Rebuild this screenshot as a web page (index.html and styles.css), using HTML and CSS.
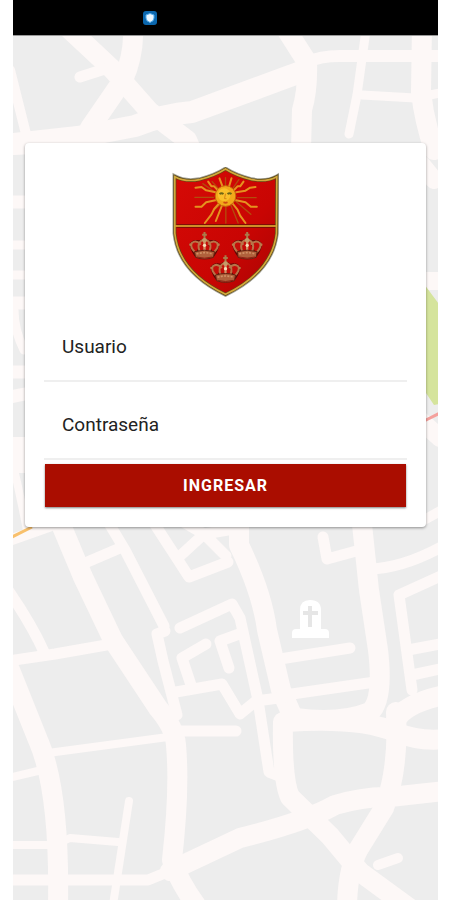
FILE: index.html
```html
<!DOCTYPE html>
<html lang="es">
<head>
    <meta charset="UTF-8">
    <meta name="viewport" content="width=device-width, initial-scale=1.0">
    <title>Ingresar</title>
    <link rel="stylesheet" href="styles.css">
</head>
<body>
    <div class="screen">
        <header class="status-bar">
            <svg class="status-icon" viewBox="0 0 14 14" aria-hidden="true">
                <rect width="14" height="14" rx="3" fill="#0b67ae"/>
                <path d="M7 2.5 L11 4 V7 Q11 10 7 11.5 Q3 10 3 7 V4 Z" fill="#eaf7ff" stroke="#55acec" stroke-width="1"/>
            </svg>
        </header>

        <main class="content">
            <!-- Map background -->
            <svg class="map" viewBox="13 36 425 864" preserveAspectRatio="xMidYMin slice" aria-hidden="true">
                <rect x="13" y="36" width="425" height="864" fill="#ededed"/>
                <g class="roads">
                    <!-- North -->
                    <g stroke-width="20">
                        <path d="M66 26 L112 69 L150 112 L187 140 L200 170"/>
                        <path d="M133 30 Q134 55 123 80 L90 128"/>
                        <path d="M13 144 L78 137 L135 126 Q165 114 192 112 L298 73" stroke-width="22"/>
                        <path d="M284 26 L307 62 Q308 90 302 110 L301 150"/>
                        <path d="M422 26 L421 92 Q424 120 434 150"/>
                    </g>
                    <path d="M80 77 L108 68" stroke-width="11"/>
                    <path d="M308 62 Q320 56 340 56 H445" stroke-width="12"/>
                    <path d="M366 30 L357 95 L349 134" stroke-width="9"/>
                    <path d="M362 95 L415 98 L445 92" stroke-width="9"/>
                    <path d="M10 70 L28 142" stroke-width="10"/>
                    <!-- West edge -->
                    <path d="M5 148 H40 M5 202 H40 M5 303 H40 M5 372 H40 M5 398 L35 392" stroke-width="13"/>
                    <path d="M5 245 H40 M5 275 H40 M24 350 Q14 330 14 310" stroke-width="9"/>
                    <path d="M5 455 H40" stroke-width="36"/>
                    <path d="M14 470 Q17 480 28 535" stroke-width="8"/>
                    <!-- East edge -->
                    <path d="M422 165 L434 180 M420 281 H445 M420 420 L440 438" stroke-width="18"/>
                    <path d="M424 520 L442 510" stroke-width="10"/>
                    <!-- South -->
                    <g stroke-width="20">
                        <path d="M57 515 L83 577 L113 640 L158 708 Q175 728 176 745 Q180 790 172 860 Q178 880 196 905"/>
                        <path d="M10 670 L38 740 Q60 790 58 905"/>
                        <path d="M239 515 V545 Q262 592 267 630 L281 690 L292 715"/>
                        <path d="M361 515 L369 590 L378 650 Q384 700 370 712 Q340 724 295 718"/>
                        <path d="M170 871 L240 838 Q305 822 335 805 Q365 796 390 797 L445 791"/>
                        <path d="M283 722 Q282 780 290 797 L330 836 L360 872 L412 910"/>
                        <path d="M396 712 Q399 770 384 808 L358 850 Q348 870 347 905"/>
                        <path d="M286 722 Q360 717 395 732 Q420 742 445 739"/>
                        <path d="M396 720 Q406 703 445 695"/>
                    </g>
                    <g stroke-width="11">
                        <path d="M8 541 L50 526"/>
                        <path d="M107 520 L125 550 L164 626"/>
                        <path d="M85 563 L120 548"/>
                        <path d="M152 520 L189 577 L228 562"/>
                        <path d="M180 556 L204 534 L226 556 M180 520 L204 534 L240 528"/>
                        <path d="M8 590 Q32 625 44 652"/>
                        <path d="M8 661 L55 654 L112 644"/>
                        <path d="M8 880 H148 L170 871"/>
                        <path d="M323 537 L327 559 L360 550"/>
                        <path d="M370 569 Q404 568 445 545"/>
                        <path d="M445 574 L399 595 L412 690"/>
                        <path d="M408 650 L445 643 M412 675 L445 668"/>
                        <path d="M280 659 L350 648"/>
                        <path d="M285 695 L375 682"/>
                        <path d="M165 631 L157 634 L163 661 L177 715"/>
                        <path d="M180 628 L232 604 L240 618 L258 700 L269 772 L282 777"/>
                        <path d="M206 644 L182 658 L192 688"/>
                        <path d="M176 692 L222 684 L240 714 L256 701 L286 697"/>
                        <path d="M242 633 L220 641 L229 668"/>
                        <path d="M180 731 H236"/>
                    </g>
                    <g stroke-width="8">
                        <path d="M48 753 L168 737 M8 778 L42 770"/>
                        <path d="M8 845 H55 L70 838 L118 842"/>
                        <path d="M129 801 L113 905"/>
                    </g>
                    <path d="M378 865 L398 858" stroke-width="10"/>
                </g>
                <path d="M424 284 L439 304 V404 L434 405 L424 390 Z" fill="#d5e49c"/>
                <path d="M424 421 L440 413" stroke="#f4a09c" stroke-width="3"/>
                <path d="M12 537 L32 527" stroke="#f8c06c" stroke-width="3"/>
                <!-- Cemetery marker -->
                <path d="M300 629 V610 Q300 600 310 600 Q321 600 321 610 V629 H325 Q329 629 329 633 V638 H292 V633 Q292 629 296 629 Z" fill="#fff"/>
                <path d="M310 606 V627 M303 613 H318" stroke="#e6e6e6" stroke-width="4"/>
            </svg>

            <form class="card">
                <!-- Coat of arms -->
                <svg class="crest" viewBox="36 36 320 390" role="img" aria-label="Escudo">
                    <defs>
                        <linearGradient id="field" x1="0" y1="0" x2="1" y2="1">
                            <stop offset="0" stop-color="#d60a06"/>
                            <stop offset="0.6" stop-color="#c90503"/>
                            <stop offset="1" stop-color="#a80504"/>
                        </linearGradient>
                        <g id="crown">
                            <path d="M-30 30 Q-46 6 -44 -8 Q-34 -22 -15 -17 Q0 -28 15 -17 Q34 -22 44 -8 Q46 6 30 30 Q0 42 -30 30 Z" fill="#5c0804"/>
                            <path d="M-27 20 Q-45 3 -38 -9 Q-24 -20 -11 -4 M27 20 Q45 3 38 -9 Q24 -20 11 -4 M-14 18 Q-24 -5 -9 -16 Q0 -22 9 -16 Q24 -5 14 18" fill="#c50d08" stroke="#b87448" stroke-width="6"/>
                            <path d="M0 -14 V18" stroke="#cf9265" stroke-width="7"/>
                            <path d="M0 -42 V-18 M-7 -34 H7" stroke="#a97d4b" stroke-width="6"/>
                            <circle cy="-17" r="7" fill="#c69a68"/>
                            <circle cy="-2" r="5" fill="#f4dfba"/>
                            <circle cx="-42" cy="-4" r="4" fill="#bd7b4b"/>
                            <circle cx="42" cy="-4" r="4" fill="#bd7b4b"/>
                            <path d="M-30 17 Q0 8 30 17 L27 34 Q0 44 -27 34 Z" fill="#b0613c" stroke="#64200f" stroke-width="3"/>
                            <path d="M-24 24 Q0 16 24 24" fill="none" stroke="#d09266" stroke-width="5" stroke-dasharray="6 4"/>
                            <path d="M-24 33 Q0 40 24 33" fill="none" stroke="#8f2216" stroke-width="3"/>
                        </g>
                        <path id="shield" d="M44 65 Q75 82 118 74 Q165 62 196 42 Q227 62 275 74 Q320 82 350 65 L349 235 Q336 350 196 418 Q56 350 44 235 Z"/>
                    </defs>
                    <use href="#shield" fill="#000" stroke="#a3a195" stroke-width="14"/>
                    <use href="#shield" fill="url(#field)" stroke="#5c4a16" stroke-width="9"/>
                    <use href="#shield" fill="none" stroke="#d3a83c" stroke-width="5"/>
                    <path d="M49 213 H345" stroke="#681006" stroke-width="11"/>
                    <path d="M46 213 H347" stroke="#f2b933" stroke-width="5"/>
                    <!-- Sun -->
                    <g fill="none" stroke="#b34d0b" stroke-width="4" stroke-linecap="round">
                        <path d="M196 68 V94 M197 152 V204 M104 127 H160 M232 128 H288 M156 80 L180 107 M236 74 L214 106 M128 86 L168 114 M160 166 L182 148 M212 150 L234 204 M226 138 L272 178"/>
                    </g>
                    <g fill="none" stroke="#e5921f" stroke-width="6" stroke-linecap="round" stroke-linejoin="round">
                        <path d="M106 98 L124 96 L138 106 L166 112"/>
                        <path d="M286 96 L270 98 L256 107 L228 112"/>
                        <path d="M106 155 L124 155 L138 142 L166 136"/>
                        <path d="M290 155 L272 155 L256 142 L228 136"/>
                        <path d="M144 80 L154 94 L162 94 L178 111"/>
                        <path d="M250 80 L240 94 L232 94 L216 111"/>
                        <path d="M134 204 L154 178 L162 162 L178 144"/>
                        <path d="M256 204 L240 182 L232 164 L216 144"/>
                        <path d="M178 70 L188 97 M214 70 L206 97 M167 198 L186 150"/>
                    </g>
                    <circle cx="196" cy="123" r="31" fill="#f2a81a" stroke="#c86a0c" stroke-width="3"/>
                    <circle cx="192" cy="119" r="19" fill="#fac02a"/>
                    <path d="M178 117 Q184 112 190 117 M202 117 Q208 112 214 117" fill="none" stroke="#6f6515" stroke-width="6"/>
                    <path d="M196 116 L193 131 H199" fill="none" stroke="#d68513" stroke-width="3"/>
                    <path d="M190 142 Q196 145 202 142" fill="none" stroke="#cf4b12" stroke-width="5"/>
                    <use href="#crown" x="133" y="273"/>
                    <use href="#crown" x="261" y="273"/>
                    <use href="#crown" x="196" y="343"/>
                </svg>

                <input class="field" type="text" name="usuario" placeholder="Usuario" aria-label="Usuario" autocomplete="username">
                <input class="field" type="password" name="contrasena" placeholder="Contraseña" aria-label="Contraseña" autocomplete="current-password">
                <button class="submit" type="submit">INGRESAR</button>
            </form>
        </main>
    </div>
</body>
</html>
```

FILE: styles.css
```css
* {
    box-sizing: border-box;
}
body {
    margin: 0;
    background: #fff;
    font-family: Roboto, "Liberation Sans", sans-serif;
}
.screen {
    display: flex;
    flex-direction: column;
    min-height: 100vh;
    margin: 0 12px 0 13px;
}
.status-bar {
    display: flex;
    align-items: center;
    height: 36px;
    padding-left: 130px;
    background: #000;
    border-bottom: 1px solid #999;
}
.status-icon {
    width: 14px;
    height: 14px;
}
.content {
    position: relative;
    flex: 1;
    padding: 107px 12px 24px;
    overflow: hidden;
}
/* Map sits behind the login card */
.map {
    position: absolute;
    inset: 0;
    width: 100%;
    height: 100%;
}
.roads {
    fill: none;
    stroke: #fdf8f7;
    stroke-linecap: round;
    stroke-linejoin: round;
}
.card {
    position: relative;
    display: flex;
    flex-direction: column;
    padding: 24px 19px 20px;
    background: #fff;
    border-radius: 4px;
    box-shadow: 0 1px 3px rgba(0, 0, 0, 0.4);
}
.crest {
    align-self: center;
    width: 107px;
    height: 130px;
    margin-bottom: 7px;
}
.field {
    width: 100%;
    height: 78px;
    padding: 8px 18px 0;
    border: none;
    border-bottom: 2px solid #efefef;
    border-radius: 0;
    background: transparent;
    color: #222;
    font-family: inherit;
    font-size: 19px;
    outline: none;
}
.field::placeholder {
    color: #222;
    opacity: 1;
}
.submit {
    height: 43px;
    margin: 4px 1px 0;
    padding: 0;
    border: none;
    background: #aa0d00;
    box-shadow: 0 1px 2px rgba(0, 0, 0, 0.5);
    color: #fff;
    font-family: inherit;
    font-size: 16px;
    font-weight: 700;
    letter-spacing: 1px;
    cursor: pointer;
}
.submit:hover {
    background: #8f0b00;
}
```
